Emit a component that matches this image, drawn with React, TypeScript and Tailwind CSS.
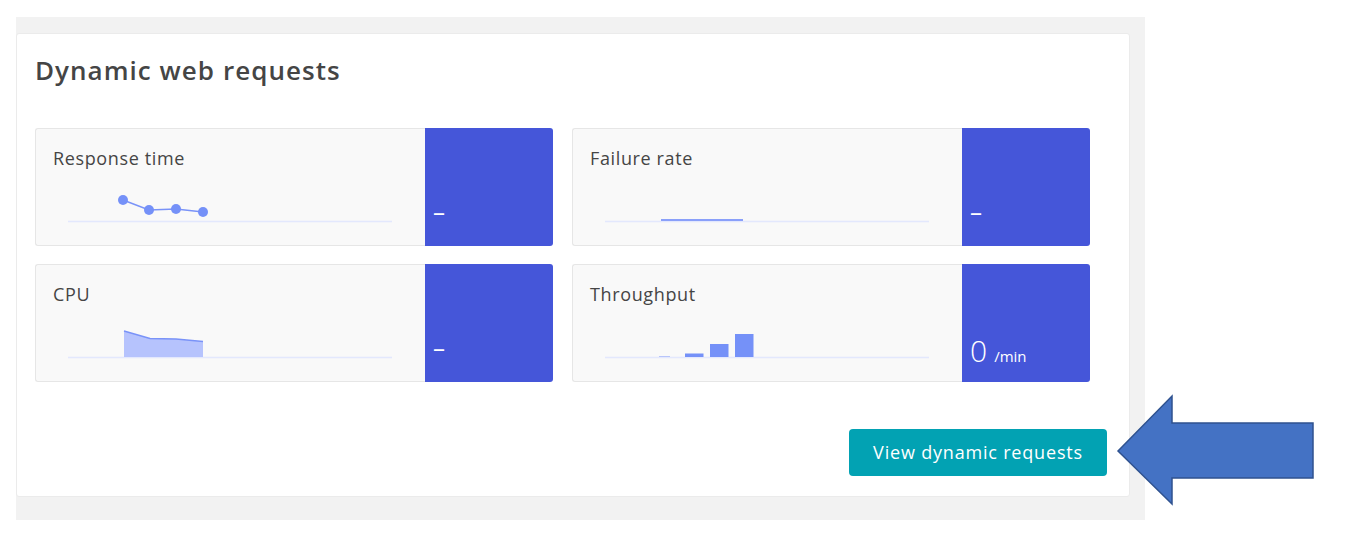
const PANEL = 'bg-[#4556d9]'

function Baseline() {
  return <line x1="32" y1="45.5" x2="356" y2="45.5" stroke="#e3e8fd" strokeWidth="1.5" />
}

function ResponseChart() {
  const pts = [
    [87, 24],
    [113, 34],
    [140, 33],
    [167, 36],
  ]
  return (
    <>
      <Baseline />
      <polyline
        points={pts.map(p => p.join(',')).join(' ')}
        fill="none"
        stroke="#7a93f8"
        strokeWidth="1.5"
      />
      {pts.map(([x, y], i) => (
        <circle key={i} cx={x} cy={y} r="5" fill="#7591f8" />
      ))}
    </>
  )
}

function FailureChart() {
  return (
    <>
      <Baseline />
      <line x1="88" y1="44" x2="170" y2="44" stroke="#8aa0fa" strokeWidth="2" />
    </>
  )
}

function CpuChart() {
  return (
    <>
      <Baseline />
      <polygon points="88,19 114,26.5 140,27 167,29.5 167,45 88,45" fill="#b6c3fd" />
      <polyline points="88,19 114,26.5 140,27 167,29.5" fill="none" stroke="#7a93f8" strokeWidth="1.5" />
    </>
  )
}

function ThroughputChart() {
  const bars = [
    [112, 41.5],
    [137, 32],
    [162, 22],
  ]
  return (
    <>
      <Baseline />
      <rect x="86" y="44.2" width="11" height="0.8" fill="#a9b9fb" />
      {bars.map(([x, y], i) => (
        <rect key={i} x={x} y={y} width="18.5" height={45 - y} fill="#7591f8" />
      ))}
    </>
  )
}

function Tile({ title, chart, value }: { title: string; chart: React.ReactNode; value: React.ReactNode }) {
  return (
    <div className="flex h-[118px]">
      <div className="flex-1 flex flex-col bg-[#f9f9f9] border border-r-0 border-[#e6e6e6] rounded-l-[3px]">
        <div className="pl-[17px] pt-[17px] text-[18px] leading-[24px] tracking-[0.035em] text-[#454545]">
          {title}
        </div>
        <svg className="block mt-[6px]" width="388" height="56">
          {chart}
        </svg>
      </div>
      <div className={`w-[128px] ${PANEL} rounded-r-[3px] flex items-end pl-[8px] text-white`}>{value}</div>
    </div>
  )
}

function Dash() {
  return <span className="text-[24px] leading-none pb-[22px]">–</span>
}

export default function App() {
  return (
    <div
      className="relative w-[1347px] h-[552px] bg-white pl-[16px] pt-[17px]"
      style={{ fontFamily: '"Open Sans", "Noto Sans", sans-serif' }}
    >
      <div className="w-[1129px] h-[503px] bg-[#f2f2f2] pt-[16px] pr-[15px] pb-[23px]">
        <div className="h-full bg-white border border-[#ebebeb] rounded-[3px] pl-[18px] pr-[22px] pt-[20px]">
          <h2 className="text-[26px] leading-[32px] font-semibold tracking-[0.04em] text-[#454545]">
            Dynamic web requests
          </h2>

          <div className="mt-[42px] w-[1055px] grid grid-cols-2 gap-x-[19px] gap-y-[18px]">
            <Tile title="Response time" chart={<ResponseChart />} value={<Dash />} />
            <Tile title="Failure rate" chart={<FailureChart />} value={<Dash />} />
            <Tile title="CPU" chart={<CpuChart />} value={<Dash />} />
            <Tile
              title="Throughput"
              chart={<ThroughputChart />}
              value={
                <span className="pb-[16px] leading-none">
                  <span className="text-[30px] font-light">0</span>
                  <span className="text-[15px] ml-[7px]">/min</span>
                </span>
              }
            />
          </div>

          <div className="flex justify-end mt-[47px]">
            <button className="w-[258px] h-[47px] bg-[#02a2b3] rounded-[4px] text-white text-[18px] font-medium tracking-[0.045em]">
              View dynamic requests
            </button>
          </div>
        </div>
      </div>

      {/* callout arrow */}
      <svg className="absolute left-[1116px] top-[394px]" width="200" height="112">
        <polygon
          points="2,57 56,2 56,29 197,29 197,84 56,84 56,110"
          fill="#4472c4"
          stroke="#2f528f"
          strokeWidth="1.5"
        />
      </svg>
    </div>
  )
}
